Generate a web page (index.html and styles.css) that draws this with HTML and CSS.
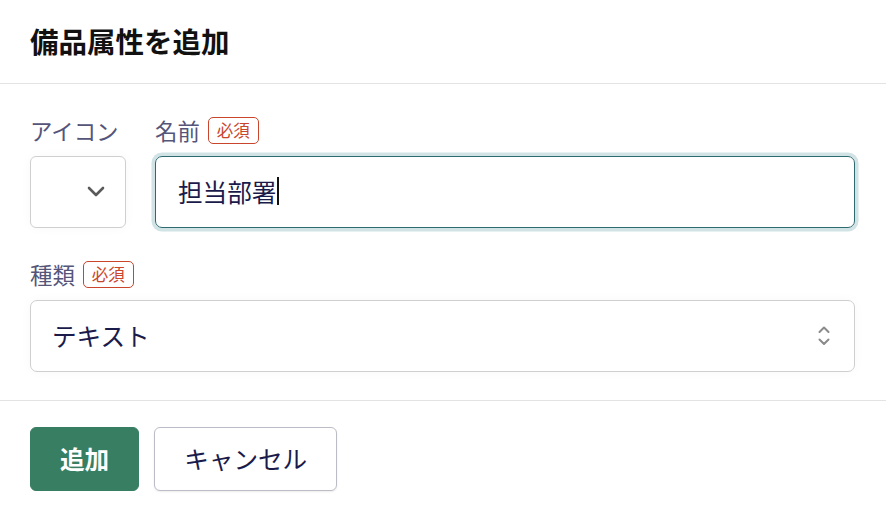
FILE: index.html
```html
<!DOCTYPE html>
<html>
<head>
    <title>備品属性を追加</title>
    <link rel="stylesheet" href="styles.css">
</head>
<body>
    <div class="dialog">
        <div class="dialog-header">
            <h1>備品属性を追加</h1>
        </div>
        <div class="dialog-body">
            <div class="row">
                <div class="field field-icon">
                    <div class="label">アイコン</div>
                    <div class="icon-select">
                        <svg width="18" height="12" viewBox="0 0 18 12">
                            <path d="M2 2 L9 9 L16 2" fill="none" stroke="#5a5a5a" stroke-width="2.6" stroke-linecap="round" stroke-linejoin="round"/>
                        </svg>
                    </div>
                </div>
                <div class="field field-grow">
                    <div class="label">名前 <span class="badge">必須</span></div>
                    <div class="text-input focused">担当部署<span class="caret"></span></div>
                </div>
            </div>
            <div class="field">
                <div class="label">種類 <span class="badge">必須</span></div>
                <div class="select">
                    <span>テキスト</span>
                    <svg width="14" height="24" viewBox="0 0 14 24">
                        <path d="M2.5 8 L7 3.5 L11.5 8" fill="none" stroke="#8a8a8a" stroke-width="2" stroke-linecap="round" stroke-linejoin="round"/>
                        <path d="M2.5 15.5 L7 20 L11.5 15.5" fill="none" stroke="#8a8a8a" stroke-width="2" stroke-linecap="round" stroke-linejoin="round"/>
                    </svg>
                </div>
            </div>
        </div>
        <div class="dialog-footer">
            <button class="btn btn-primary">追加</button>
            <button class="btn btn-secondary">キャンセル</button>
        </div>
    </div>
</body>
</html>
```

FILE: styles.css
```css
body {
    margin: 0;
    font-family: "Noto Sans CJK JP", "Noto Sans", sans-serif;
    background-color: #ffffff;
    color: #1b1b4b;
}
.dialog {
    width: 886px;
}
.dialog-header {
    height: 83px;
    padding: 0 30px;
    display: flex;
    align-items: center;
    border-bottom: 1px solid #e3e3e3;
}
.dialog-header h1 {
    margin: 0;
    margin-top: -3px;
    font-size: 28.5px;
    font-weight: 700;
    color: #111111;
}
.dialog-body {
    padding: 30px 31px 28px 30px;
    display: flex;
    flex-direction: column;
    gap: 30px;
    border-bottom: 1px solid #e3e3e3;
}
.row {
    display: flex;
    gap: 29px;
}
.field {
    display: flex;
    flex-direction: column;
    gap: 10px;
}
.field-grow {
    flex: 1;
}
.label {
    height: 32px;
    display: flex;
    align-items: center;
    gap: 8px;
    font-size: 22.4px;
    color: #55557a;
}
.badge {
    display: inline-flex;
    align-items: center;
    height: 25px;
    padding: 0 8px;
    border: 1px solid #c9452c;
    border-radius: 5px;
    font-size: 16.5px;
    color: #c9452c;
}
.icon-select {
    width: 74px;
    height: 70px;
    padding-right: 20px;
    border: 1px solid #cfcfcf;
    border-radius: 6px;
    box-shadow: 0 0 12px rgba(0, 0, 0, 0.03);
    display: flex;
    align-items: center;
    justify-content: flex-end;
}
.text-input {
    height: 68px;
    padding: 0 23px 2px 22px;
    border: 1px solid #cfcfcf;
    border-radius: 7px;
    display: flex;
    align-items: center;
    font-size: 24.6px;
    color: #1b1b4b;
}
.text-input.focused {
    border-color: #2e6b70;
    box-shadow: 0 0 0 3.5px #d2e3e5;
}
.caret {
    display: inline-block;
    width: 2px;
    height: 28px;
    background-color: #111;
    margin-left: 1px;
}
.select {
    height: 68px;
    padding: 0 23px 2px 21px;
    border: 1px solid #cfcfcf;
    border-radius: 7px;
    display: flex;
    align-items: center;
    justify-content: space-between;
    font-size: 24.6px;
    box-shadow: 0 0 12px rgba(0, 0, 0, 0.03);
}
.select svg {
    margin-top: 2px;
}
.dialog-footer {
    padding: 26px 30px;
    display: flex;
    gap: 15px;
}
.btn {
    height: 64px;
    padding: 0 29px 2px;
    border-radius: 6px;
    font-family: inherit;
    font-size: 24.6px;
    cursor: pointer;
}
.btn-primary {
    background-color: #377e62;
    border: 1px solid #377e62;
    color: #ffffff;
    font-weight: 700;
}
.btn-secondary {
    background-color: #ffffff;
    border: 1px solid #bcbcc6;
    color: #1b1b4b;
    box-shadow: 0 1px 2px rgba(0, 0, 0, 0.08);
}
```
